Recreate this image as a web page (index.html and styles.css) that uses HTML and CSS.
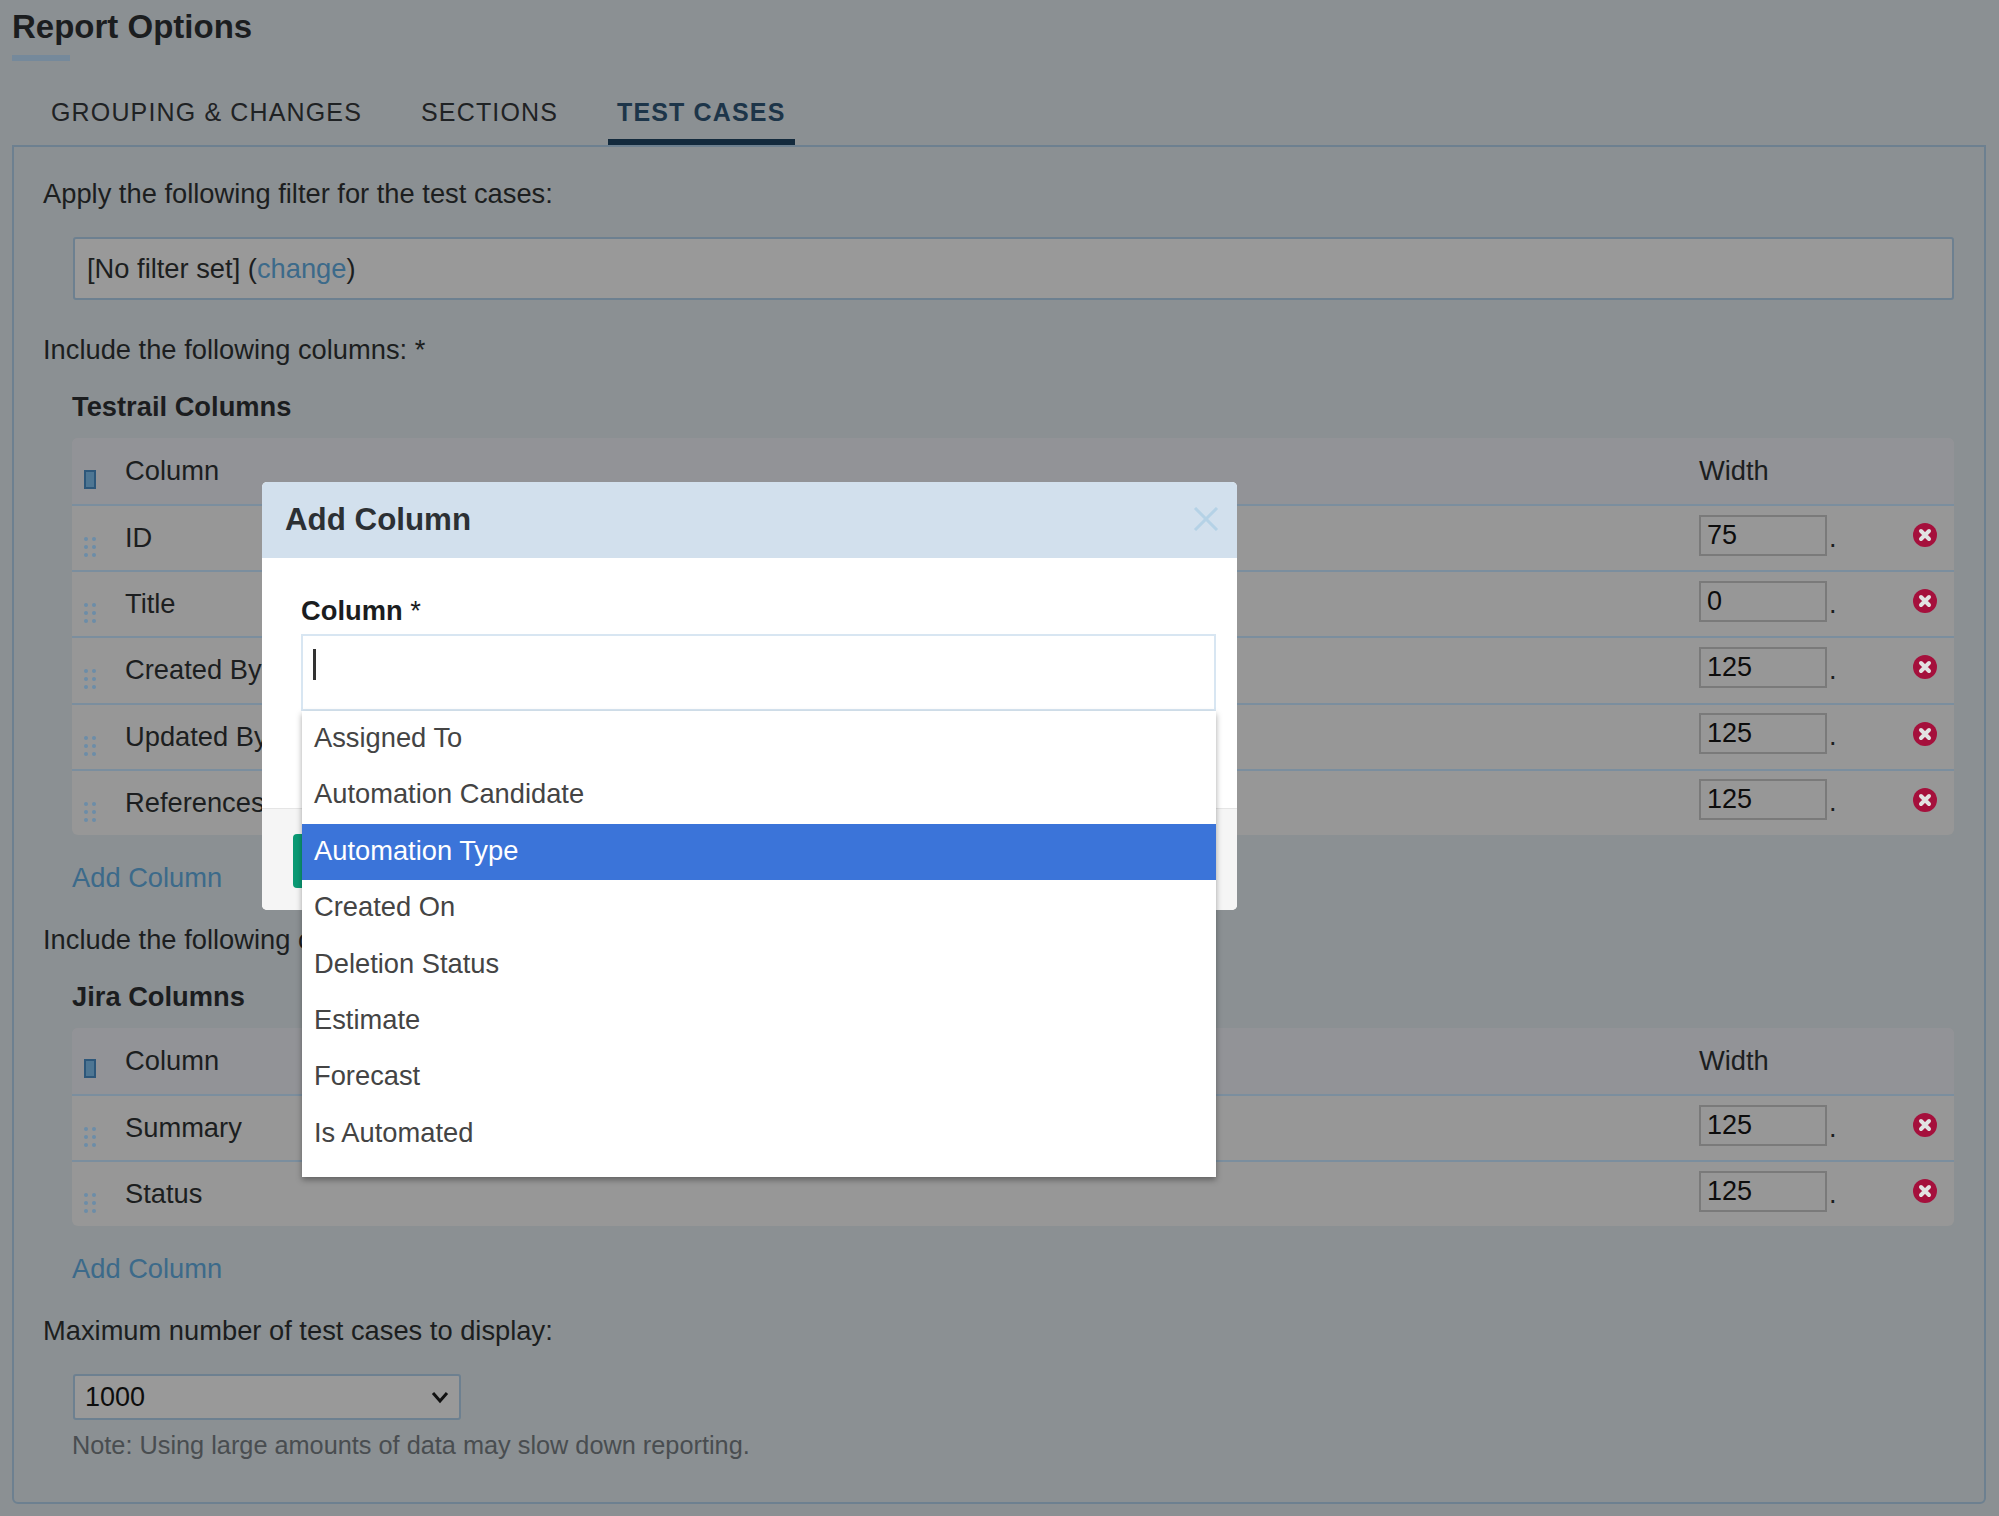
FILE: index.html
```html
<!DOCTYPE html>
<html lang="en">
<head>
  <meta charset="UTF-8">
  <title>Report Options</title>
  <link rel="stylesheet" href="styles.css">
</head>
<body>
  <h1>Report Options</h1>
  <div class="rule"></div>
  <div class="tabs">
    <a class="tab">GROUPING &amp; CHANGES</a>
    <a class="tab">SECTIONS</a>
    <a class="tab active">TEST CASES</a>
  </div>
  <div class="panel">
    <p class="label first">Apply the following filter for the test cases:</p>
    <div class="filter">[No filter set] (<a class="link">change</a>)</div>

    <p class="label gap-filter">Include the following columns: *</p>
    <h3>Testrail Columns</h3>
    <div class="columns">
      <div class="row head">
        <span class="sort"></span><span>Column</span><span>Width</span><span></span>
      </div>
      <div class="row">
        <span class="grip"><i></i><i></i><i></i><i></i><i></i><i></i></span>
        <span>ID</span>
        <span class="width"><input value="75"><b>.</b></span>
        <svg class="remove" viewBox="0 0 24 24"><circle cx="12" cy="12" r="12"/><path d="M8 8l8 8M16 8l-8 8"/></svg>
      </div>
      <div class="row">
        <span class="grip"><i></i><i></i><i></i><i></i><i></i><i></i></span>
        <span>Title</span>
        <span class="width"><input value="0"><b>.</b></span>
        <svg class="remove" viewBox="0 0 24 24"><circle cx="12" cy="12" r="12"/><path d="M8 8l8 8M16 8l-8 8"/></svg>
      </div>
      <div class="row">
        <span class="grip"><i></i><i></i><i></i><i></i><i></i><i></i></span>
        <span>Created By</span>
        <span class="width"><input value="125"><b>.</b></span>
        <svg class="remove" viewBox="0 0 24 24"><circle cx="12" cy="12" r="12"/><path d="M8 8l8 8M16 8l-8 8"/></svg>
      </div>
      <div class="row">
        <span class="grip"><i></i><i></i><i></i><i></i><i></i><i></i></span>
        <span>Updated By</span>
        <span class="width"><input value="125"><b>.</b></span>
        <svg class="remove" viewBox="0 0 24 24"><circle cx="12" cy="12" r="12"/><path d="M8 8l8 8M16 8l-8 8"/></svg>
      </div>
      <div class="row">
        <span class="grip"><i></i><i></i><i></i><i></i><i></i><i></i></span>
        <span>References</span>
        <span class="width"><input value="125"><b>.</b></span>
        <svg class="remove" viewBox="0 0 24 24"><circle cx="12" cy="12" r="12"/><path d="M8 8l8 8M16 8l-8 8"/></svg>
      </div>
    </div>
    <a class="link add">Add Column</a>

    <p class="label gap-add">Include the following columns from Jira:</p>
    <h3>Jira Columns</h3>
    <div class="columns">
      <div class="row head">
        <span class="sort"></span><span>Column</span><span>Width</span><span></span>
      </div>
      <div class="row">
        <span class="grip"><i></i><i></i><i></i><i></i><i></i><i></i></span>
        <span>Summary</span>
        <span class="width"><input value="125"><b>.</b></span>
        <svg class="remove" viewBox="0 0 24 24"><circle cx="12" cy="12" r="12"/><path d="M8 8l8 8M16 8l-8 8"/></svg>
      </div>
      <div class="row">
        <span class="grip"><i></i><i></i><i></i><i></i><i></i><i></i></span>
        <span>Status</span>
        <span class="width"><input value="125"><b>.</b></span>
        <svg class="remove" viewBox="0 0 24 24"><circle cx="12" cy="12" r="12"/><path d="M8 8l8 8M16 8l-8 8"/></svg>
      </div>
    </div>
    <a class="link add">Add Column</a>

    <p class="label gap-add">Maximum number of test cases to display:</p>
    <div class="select-wrap">
      <select><option>1000</option></select>
      <svg class="chevron" viewBox="0 0 20 14"><path d="M3 3l7 8 7-8"/></svg>
    </div>
    <p class="note">Note: Using large amounts of data may slow down reporting.</p>
  </div>

  <div class="modal">
    <div class="modal-head">
      <h2>Add Column</h2>
      <svg class="close" viewBox="0 0 26 24"><path d="M2 1l22 22M24 1L2 23"/></svg>
    </div>
    <div class="modal-body">
      <label>Column <span>*</span></label>
      <div class="combo"><span class="caret"></span></div>
    </div>
    <div class="modal-foot">
      <button class="submit"></button>
    </div>
    <ul class="options">
      <li>Assigned To</li>
      <li>Automation Candidate</li>
      <li class="selected">Automation Type</li>
      <li>Created On</li>
      <li>Deletion Status</li>
      <li>Estimate</li>
      <li>Forecast</li>
      <li>Is Automated</li>
    </ul>
  </div>
</body>
</html>
```

FILE: styles.css
```css
* {
  box-sizing: border-box;
}
html, body {
  margin: 0;
  height: 1516px;
  overflow: hidden;
}
body {
  position: relative;
  padding: 7px 13px 0 12px;
  font-family: "Liberation Sans", Arial, sans-serif;
  font-size: 27.3px;
  line-height: 30px;
  color: #1c1e20;
  background-color: #8b9093;
}
h1 {
  margin: 0;
  font-size: 33px;
  line-height: 40px;
  color: #1b1d1f;
}
.rule {
  margin-top: 8px;
  width: 58px;
  height: 6px;
  background-color: #75899b;
}
.tabs {
  display: flex;
  gap: 41px;
  margin-top: 36px;
  margin-left: 30px;
}
.tab {
  padding: 0 9px 12px;
  border-bottom: 6px solid transparent;
  font-size: 25px;
  letter-spacing: 1.15px;
  color: #1f2224;
}
.tab.active {
  font-weight: bold;
  color: #1d3549;
  border-bottom-color: #132a3d;
}
.panel {
  padding: 0 30px 40px 29px;
  border: 2px solid #6d8090;
  border-radius: 0 0 6px 6px;
  height: 1359px;
}
.label {
  margin: 0;
}
.first {
  margin-top: 32px;
}
.gap-filter {
  margin-top: 35px;
}
.gap-add {
  margin-top: 32px;
}
h3 {
  margin: 27px 0 16px 29px;
  font-size: 27.3px;
  line-height: 30px;
  color: #1b1d1f;
}
.filter {
  display: flex;
  align-items: center;
  margin: 28px 0 0 30px;
  padding-left: 12px;
  height: 63px;
  border: 2px solid #6d8090;
  border-radius: 3px;
  background-color: #999;
  white-space: pre;
}
.link {
  color: #3c6a8a;
}
.columns {
  margin-left: 29px;
  border-radius: 6px;
  overflow: hidden;
  background-color: #979797;
}
.row {
  display: grid;
  grid-template-columns: 53px 1fr 214px 41px;
  align-items: center;
  height: 66.2px;
  border-top: 2px solid #7b8e9e;
}
.row.head {
  height: 66px;
  border-top: 0;
  background-color: #929397;
}
.sort {
  margin: 16px 0 0 12px;
  width: 12px;
  height: 19px;
  border: 2px solid #2d577a;
  background-color: #4e7693;
}
.grip {
  display: grid;
  grid-template-columns: 4px 4px;
  grid-auto-rows: 4px;
  gap: 4px;
  justify-content: start;
  margin: 18px 0 0 12px;
}
.grip i {
  display: block;
  width: 4px;
  height: 4px;
  border-radius: 50%;
  background-color: #6c8da8;
}
.width {
  display: flex;
  align-items: flex-end;
  margin-top: -6px;
}
.width input {
  width: 128px;
  height: 41px;
  padding: 0 6px;
  border: 2px solid #7a7a7a;
  background-color: transparent;
  font: 27px "Liberation Sans", Arial, sans-serif;
  color: #0d0d0d;
  outline: none;
}
.width b {
  margin: 0 0 5px 2px;
  font-weight: normal;
  line-height: 26px;
}
.remove {
  width: 24px;
  height: 24px;
  margin-top: -6px;
}
.remove circle {
  fill: #a5103c;
}
.remove path {
  stroke: #e2e2e2;
  stroke-width: 4;
  stroke-linecap: round;
}
.add {
  display: block;
  margin: 28px 0 0 29px;
}
.select-wrap {
  position: relative;
  margin: 28px 0 0 30px;
  width: 388px;
}
.select-wrap select {
  display: block;
  width: 100%;
  height: 46px;
  padding-left: 10px;
  border: 2px solid #6d8090;
  border-radius: 3px;
  appearance: none;
  background-color: #999;
  font: 27px "Liberation Sans", Arial, sans-serif;
  color: #0d0d0d;
}
.chevron {
  position: absolute;
  top: 16px;
  right: 11px;
  width: 20px;
  height: 14px;
  fill: none;
  stroke: #111;
  stroke-width: 3;
}
.note {
  margin: 10px 0 0 29px;
  font-size: 25.3px;
  color: #494d50;
}

.modal {
  position: absolute;
  left: 262px;
  top: 482px;
  width: 975px;
  height: 428px;
  border-radius: 5px;
  background-color: #fff;
}
.modal-head {
  display: flex;
  justify-content: space-between;
  align-items: center;
  height: 76px;
  padding: 0 18px 0 23px;
  border-radius: 5px 5px 0 0;
  background-color: #d2e0ed;
}
.modal-head h2 {
  margin: 0;
  font-size: 31.3px;
  color: #2c3034;
}
.close {
  width: 26px;
  height: 24px;
  margin-top: -3px;
  fill: none;
  stroke: #b5d2e6;
  stroke-width: 3;
}
.modal-body {
  height: 250px;
  padding: 38px 21px 0 39px;
}
.modal-body label {
  display: block;
  font-weight: bold;
  color: #1b1d1f;
}
.modal-body label span {
  font-weight: normal;
}
.combo {
  margin-top: 8px;
  height: 77px;
  padding: 13px 10px;
  border: 2px solid #d8e6f2;
  background-color: #fff;
}
.caret {
  display: block;
  width: 3px;
  height: 31px;
  background-color: #333;
}
.modal-foot {
  height: 102px;
  padding: 25px 0 0 31px;
  border-top: 1px solid #e5e5e5;
  border-radius: 0 0 5px 5px;
  background-color: #f5f5f5;
}
.submit {
  display: block;
  width: 60px;
  height: 54px;
  border: 0;
  border-radius: 4px;
  background-color: #0a9a74;
}
.options {
  position: absolute;
  left: 40px;
  top: 229px;
  width: 914px;
  height: 466px;
  margin: 0;
  padding: 0;
  list-style: none;
  background-color: #fff;
  box-shadow: 0 3px 6px rgba(0, 0, 0, 0.35);
  color: #444;
}
.options li {
  height: 56.4px;
  padding-left: 12px;
  line-height: 54px;
}
.options .selected {
  color: #fff;
  background-color: #3b74d9;
}
```
